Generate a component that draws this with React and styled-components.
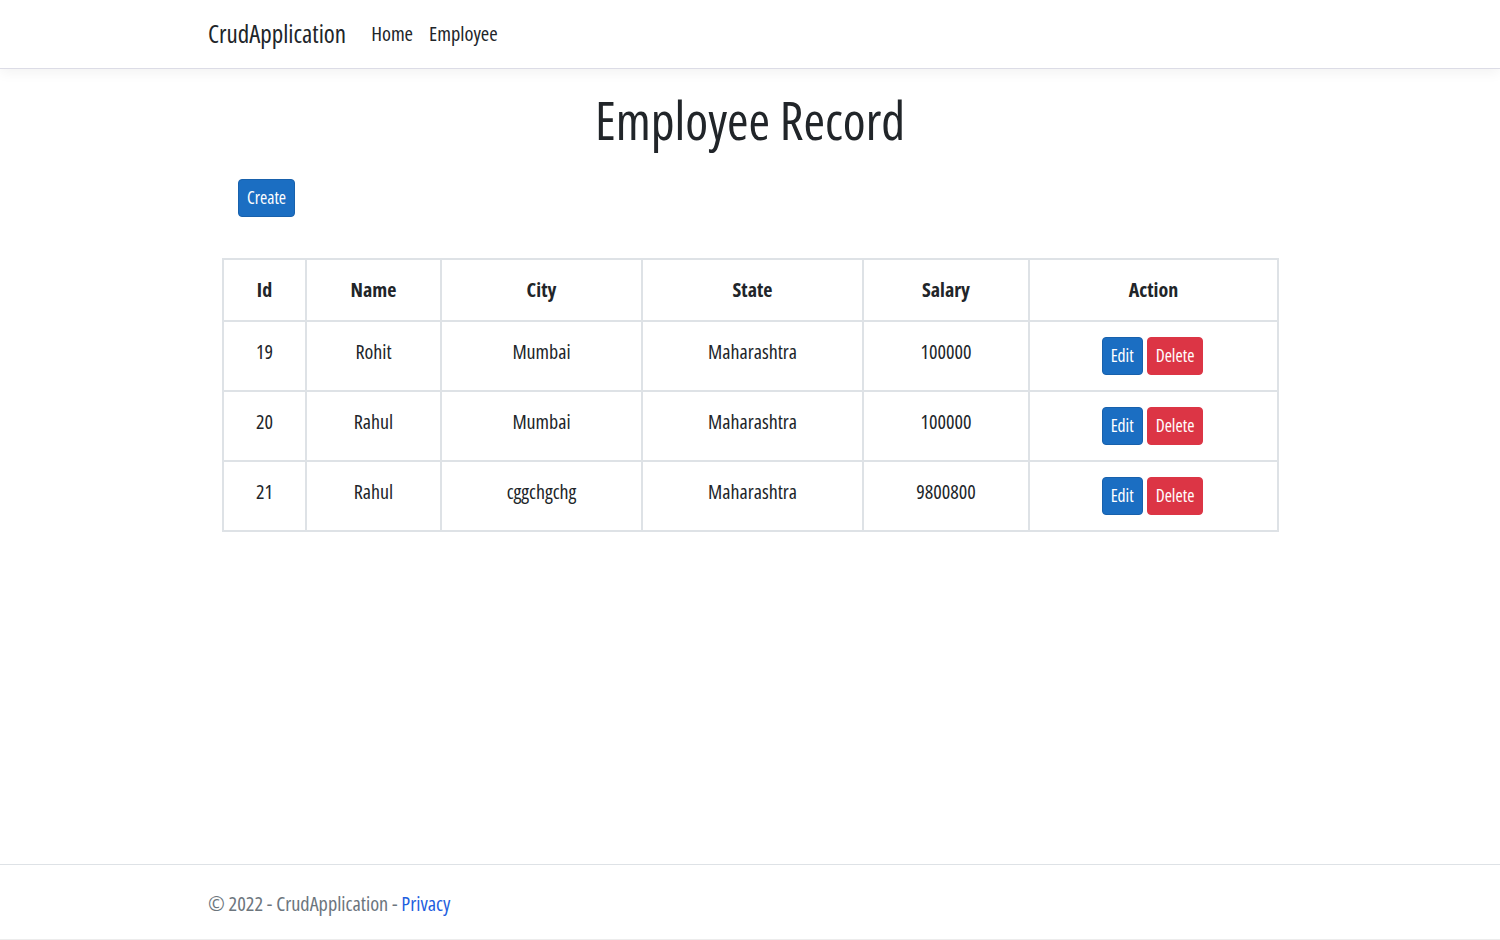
import React from 'react';
import styled, { createGlobalStyle } from 'styled-components';

const GlobalStyle = createGlobalStyle`
  * { box-sizing: border-box; }
  body {
    margin: 0;
    background: #fff;
    color: #212529;
    font-family: "Open Sans", "Liberation Sans", sans-serif;
    font-stretch: 75%;
  }
`;

const Page = styled.div`
  min-height: 940px;
  display: flex;
  flex-direction: column;
`;

const Container = styled.div`
  width: 1084px;
  margin: 0 auto;
`;

const Navbar = styled.header`
  height: 69px;
  border-bottom: 1px solid #dcdce6;
  box-shadow: 0 4px 12px rgba(0, 0, 0, 0.05);
`;

const NavInner = styled(Container)`
  height: 100%;
  display: flex;
  align-items: center;
  padding-bottom: 2px;
`;

const Brand = styled.a`
  font-size: 25px;
  color: #212529;
  text-decoration: none;
  margin-right: 17px;
`;

const NavLink = styled.a`
  font-size: 20.4px;
  color: #212529;
  text-decoration: none;
  padding: 0 8px;
`;

const Main = styled(Container)`
  flex: 1;
`;

const Title = styled.h1`
  margin: 20px 0 0;
  font-size: 52px;
  font-weight: 400;
  line-height: 1.2;
  text-align: center;
`;

const Btn = styled.button`
  height: 38px;
  padding: 0 ${p => p.$pad}px 2px;
  font-family: inherit;
  font-stretch: 75%;
  font-size: 17.5px;
  color: #fff;
  border-radius: 4px;
  border: 1px solid ${p => (p.$variant === 'danger' ? '#dc3545' : '#1861ac')};
  background: ${p => (p.$variant === 'danger' ? '#dc3545' : '#1b6ec2')};
  cursor: pointer;
`;

const CreateRow = styled.div`
  margin-top: 28px;
  padding-left: 30px;
`;

const Table = styled.table`
  margin: 41px 0 0 14px;
  width: 1055px;
  table-layout: fixed;
  border-collapse: collapse;
  font-size: 20px;
  text-align: center;
`;

const Th = styled.th`
  width: ${p => p.$w}px;
  height: 62px;
  border: 2px solid #dee2e6;
  font-weight: 700;
  vertical-align: middle;
  padding: 0 0 2px;
`;

const Td = styled.td`
  height: 70px;
  border: 2px solid #dee2e6;
  vertical-align: middle;
  padding: 0 ${p => (p.$action ? '2px 0 0' : '0 10px 0')};
`;

const Actions = styled.div`
  display: flex;
  justify-content: center;
  gap: 4px;
`;

const Footer = styled.footer`
  height: 76px;
  border-top: 1px solid #dee2e6;
  border-bottom: 1px solid #ececec;
  display: flex;
  align-items: center;
  padding-top: 2px;
`;

const FooterText = styled(Container)`
  font-size: 20.3px;
  color: #6c757d;
`;

const FooterLink = styled.a`
  color: #1f5fe0;
  text-decoration: none;
`;

const columns = [
  ['Id', 83],
  ['Name', 135],
  ['City', 201],
  ['State', 221],
  ['Salary', 166],
  ['Action', 249],
];

const employees = [
  { id: 19, name: 'Rohit', city: 'Mumbai', state: 'Maharashtra', salary: 100000 },
  { id: 20, name: 'Rahul', city: 'Mumbai', state: 'Maharashtra', salary: 100000 },
  { id: 21, name: 'Rahul', city: 'cggchgchg', state: 'Maharashtra', salary: 9800800 },
];

export default function App() {
  return (
    <Page>
      <GlobalStyle />
      <Navbar>
        <NavInner>
          <Brand href="#">CrudApplication</Brand>
          <NavLink href="#">Home</NavLink>
          <NavLink href="#">Employee</NavLink>
        </NavInner>
      </Navbar>
      <Main>
        <Title>Employee Record</Title>
        <CreateRow>
          <Btn $pad={8}>Create</Btn>
        </CreateRow>
        <Table>
          <thead>
            <tr>
              {columns.map(([label, w]) => (
                <Th key={label} $w={w}>{label}</Th>
              ))}
            </tr>
          </thead>
          <tbody>
            {employees.map(e => (
              <tr key={e.id}>
                <Td>{e.id}</Td>
                <Td>{e.name}</Td>
                <Td>{e.city}</Td>
                <Td>{e.state}</Td>
                <Td>{e.salary}</Td>
                <Td $action>
                  <Actions>
                    <Btn $pad={8}>Edit</Btn>
                    <Btn $pad={8} $variant="danger">Delete</Btn>
                  </Actions>
                </Td>
              </tr>
            ))}
          </tbody>
        </Table>
      </Main>
      <Footer>
        <FooterText>
          © 2022 - CrudApplication - <FooterLink href="#">Privacy</FooterLink>
        </FooterText>
      </Footer>
    </Page>
  );
}
